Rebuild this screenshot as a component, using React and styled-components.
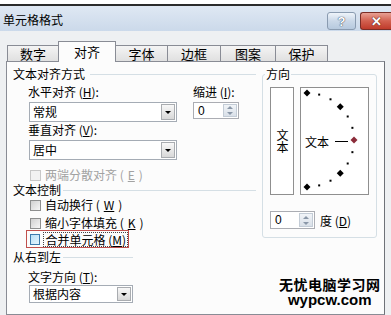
import React from 'react';
import styled, { createGlobalStyle } from 'styled-components';

const GlobalStyle = createGlobalStyle`
  html, body { margin: 0; padding: 0; background: #fff; }
  body {
    font-family: "Noto Sans CJK SC", "Noto Sans", sans-serif;
    font-size: 12px;
    color: #000;
  }
`;

const Screen = styled.div`
  position: relative;
  width: 391px;
  height: 315px;
  overflow: hidden;
  box-sizing: border-box;
  padding-top: 4px;
  background: #fff;
  display: flex;
  flex-direction: column;
`;

const Window = styled.div`
  flex: 1;
  display: flex;
  flex-direction: column;
  border-top: 2px solid #2b2b2b;
  background: #eef0f2;
  min-height: 0;
`;

const TitleBar = styled.div`
  height: 25px;
  display: flex;
  justify-content: space-between;
  padding-left: 3px;
  background: linear-gradient(#dfe8f3, #cbd9ea);
`;

const Title = styled.div`
  align-self: center;
  line-height: 14px;
  font-size: 12px;
  margin-top: 2px;
`;

const Controls = styled.div`
  display: flex;
  padding-top: 6px;
  height: 18px;
`;

const HelpButton = styled.div`
  width: 29px;
  margin-right: 4px;
  box-sizing: border-box;
  border: 1px solid #8a9bb0;
  border-radius: 3px;
  background: linear-gradient(#eef4fa, #cad8e8 50%, #b6c9de);
  display: flex;
  align-items: center;
  justify-content: center;
  font-family: "Liberation Sans", sans-serif;
  font-weight: bold;
  font-size: 13px;
  color: #fff;
  text-shadow: 0 0 1px #2d3d55, 0 0 1px #2d3d55;
`;

const CloseButton = styled.div`
  width: 31px;
  box-sizing: border-box;
  border: 1px solid #7a2d26;
  border-right: none;
  border-radius: 3px 0 0 3px;
  background: linear-gradient(#e8a093, #d2604f 50%, #bf3b2b);
  display: flex;
  align-items: center;
  justify-content: center;
  font-family: "Liberation Sans", sans-serif;
  font-weight: bold;
  font-size: 13px;
  color: #fff;
  text-shadow: 0 0 1px #5a1a12, 0 0 1px #5a1a12;
`;

const Body = styled.div`
  flex: 1;
  display: flex;
  flex-direction: column;
  padding: 0 6px;
  min-height: 0;
`;

const TabRow = styled.div`
  display: flex;
  align-items: flex-end;
  height: 20px;
  margin: 10px 0 0 1px;
`;

const Tab = styled.div`
  width: ${p => p.w}px;
  height: ${p => (p.active ? 21 : 16)}px;
  margin-bottom: ${p => (p.active ? -1 : 0)}px;
  margin-right: -1px;
  box-sizing: border-box;
  border: 1px solid #898c95;
  border-bottom: none;
  background: ${p => (p.active ? '#fcfcfc' : 'linear-gradient(#f4f4f4, #e0e0e0)')};
  display: flex;
  align-items: center;
  justify-content: center;
  font-size: 13px;
  line-height: 14px;
  position: relative;
  z-index: ${p => (p.active ? 1 : 0)};
`;

const Panel = styled.div`
  flex: 1;
  border: 1px solid #898c95;
  border-right-color: #6f7278;
  background: #fcfcfc;
  display: flex;
  gap: 6px;
  padding: 5px 6px 0 6px;
`;

const Column = styled.div`
  width: 243px;
  display: flex;
  flex-direction: column;
`;

const SectionHead = styled.div`
  display: flex;
  align-items: center;
  height: 14px;
  line-height: 14px;
  margin-top: ${p => p.mt || 0}px;
  white-space: nowrap;
  &::after {
    content: '';
    flex: 1;
    height: 1px;
    background: #d5dfe5;
    margin-left: ${p => p.gap ?? 2}px;
    margin-right: ${p => p.cut || 0}px;
  }
`;

const FieldLabel = styled.div`
  height: 14px;
  line-height: 14px;
  margin-left: ${p => p.ml ?? 15}px;
  margin-top: ${p => p.mt || 0}px;
  white-space: nowrap;
`;

const AlignRow = styled.div`
  display: flex;
  margin-top: 4px;
`;

const Cell = styled.div`
  display: flex;
  flex-direction: column;
  margin-left: ${p => p.ml || 0}px;
`;

const SelectBox = styled.div`
  width: ${p => p.w}px;
  height: ${p => p.h}px;
  box-sizing: border-box;
  margin-left: ${p => p.ml ?? 16}px;
  margin-top: ${p => p.mt || 0}px;
  border: 1px solid #a5acb5;
  background: #fff;
  display: flex;
  align-items: center;
  padding: 1px 1px 1px 3px;
`;

const SelectText = styled.span`
  flex: 1;
  line-height: 14px;
`;

const DropButton = styled.div`
  width: 14px;
  align-self: stretch;
  box-sizing: border-box;
  border: 1px solid #a9acb0;
  background: linear-gradient(#f8f8f8, #d8d8d8);
  display: flex;
  align-items: center;
  justify-content: center;
  &::before {
    content: '';
    border-left: 3px solid transparent;
    border-right: 3px solid transparent;
    border-top: 3px solid #000;
  }
`;

const Spinner = styled.div`
  width: ${p => p.w}px;
  height: ${p => p.h}px;
  box-sizing: border-box;
  margin-top: ${p => p.mt || 0}px;
  border: 1px solid #abadb3;
  background: #fff;
  display: flex;
  padding: 1px;
`;

const SpinValue = styled.span`
  flex: 1;
  padding-left: 3px;
  font-family: "Liberation Sans", sans-serif;
  font-size: 12px;
  line-height: 14px;
`;

const SpinButtons = styled.div`
  width: 14px;
  display: flex;
  flex-direction: column;
  border: 1px solid #c3ccd6;
  box-sizing: border-box;
  background: linear-gradient(#f1f4f8, #d9e0e8);
`;

const SpinArrow = styled.div`
  flex: 1;
  display: flex;
  align-items: center;
  justify-content: center;
  &::before {
    content: '';
    border-left: 3px solid transparent;
    border-right: 3px solid transparent;
    ${p => (p.up ? 'border-bottom' : 'border-top')}: 3px solid #8a97a8;
  }
`;

const CheckRow = styled.div`
  display: flex;
  align-items: center;
  gap: 4px;
  height: 14px;
  line-height: 14px;
  margin-left: 17px;
  margin-top: ${p => p.mt || 0}px;
  color: ${p => (p.disabled ? '#a2a2a2' : '#000')};
  white-space: nowrap;
`;

const Box = styled.span`
  width: 11px;
  height: 11px;
  box-sizing: border-box;
  border: 1px solid ${p => (p.focus ? '#3d7bad' : p.disabled ? '#c8c8c8' : '#8e8f8f')};
  background: ${p =>
    p.focus
      ? 'linear-gradient(135deg, #b9e0f7, #e6f5fd)'
      : p.disabled
      ? '#f2f2f2'
      : 'linear-gradient(135deg, #d0d0d0, #f6f6f6)'};
`;

const FocusRow = styled.div`
  display: flex;
  align-items: center;
  width: 103px;
  height: 18px;
  box-sizing: border-box;
  margin-left: 13px;
  padding-left: 3px;
  border: 1px solid #c0504d;
  white-space: nowrap;
`;

const FocusText = styled.span`
  margin-left: 3px;
  line-height: 13px;
  border: 1px dotted #444;
  padding: 0 1px;
`;

const Group = styled.fieldset`
  margin: 0;
  width: 115px;
  height: 171px;
  box-sizing: border-box;
  border: 1px solid #d5dfe5;
  border-radius: 3px;
  padding: 0;
`;

const Legend = styled.legend`
  margin-left: 2px;
  padding: 0 1px;
  height: 14px;
  line-height: 14px;
`;

const GroupInner = styled.div`
  padding: 6px 0 0 7px;
`;

const OrientRow = styled.div`
  display: flex;
  gap: 6px;
  height: 108px;
`;

const VerticalBox = styled.div`
  width: 24px;
  box-sizing: border-box;
  border: 1px solid #8f8f8f;
  background: #fff;
  display: flex;
  align-items: center;
  justify-content: center;
  writing-mode: vertical-rl;
  text-orientation: upright;
  line-height: 12px;
`;

const DialBox = styled.div`
  position: relative;
  width: 69px;
  box-sizing: border-box;
  border: 1px solid #8f8f8f;
  background: #fff;
  display: flex;
  align-items: center;
  padding-left: 4px;
  line-height: 14px;
`;

const DialDrawing = styled.svg`
  position: absolute;
  left: 0;
  top: 0;
`;

const DialText = styled.span`
  position: relative;
  margin-top: 1px;
`;

const DegreeRow = styled.div`
  display: flex;
  align-items: center;
  margin-top: 16px;
  gap: 5px;
`;

const Watermark = styled.div`
  position: absolute;
  left: 279px;
  top: 277px;
  display: flex;
  flex-direction: column;
  align-items: center;
  font-weight: bold;
`;

const WatermarkCn = styled.div`
  font-size: 14px;
  line-height: 14px;
  letter-spacing: 0.5px;
`;

const WatermarkEn = styled.div`
  font-family: "Liberation Sans", sans-serif;
  font-size: 15px;
  line-height: 13px;
  margin-top: 2px;
`;

const tabs = [
  { label: '数字', w: 52 },
  { label: '对齐', w: 58, active: true },
  { label: '字体', w: 53 },
  { label: '边框', w: 54 },
  { label: '图案', w: 56 },
  { label: '保护', w: 53 },
];

function Dial() {
  const cx = 6;
  const cy = 52;
  const r = 47;
  const marks = [];
  for (let k = 0; k <= 12; k++) {
    const a = ((-90 + 15 * k) * Math.PI) / 180;
    const x = cx + r * Math.cos(a);
    const y = cy + r * Math.sin(a);
    if (k % 3 === 0) {
      const fill = k === 6 ? '#8b2c3a' : '#000';
      marks.push(
        <polygon
          key={k}
          points={`${x},${y - 3.5} ${x + 3.5},${y} ${x},${y + 3.5} ${x - 3.5},${y}`}
          fill={fill}
        />
      );
    } else {
      marks.push(<rect key={k} x={x - 1} y={y - 1} width="2" height="2" fill="#000" />);
    }
  }
  return (
    <DialDrawing width="67" height="106" viewBox="0 0 67 106">
      <line x1="34" y1="53.5" x2="47" y2="53.5" stroke="#000" strokeWidth="1" />
      {marks}
    </DialDrawing>
  );
}

export default function App() {
  return (
    <>
      <GlobalStyle />
      <Screen>
        <Window>
          <TitleBar>
            <Title>单元格格式</Title>
            <Controls>
              <HelpButton>?</HelpButton>
              <CloseButton>✕</CloseButton>
            </Controls>
          </TitleBar>
          <Body>
            <TabRow>
              {tabs.map(t => (
                <Tab key={t.label} w={t.w} active={t.active}>
                  {t.label}
                </Tab>
              ))}
            </TabRow>
            <Panel>
              <Column>
                <SectionHead gap={5}>文本对齐方式</SectionHead>
                <AlignRow>
                  <Cell>
                    <FieldLabel>水平对齐 (<u>H</u>):</FieldLabel>
                    <SelectBox w={148} h={20} mt={3}>
                      <SelectText>常规</SelectText>
                      <DropButton />
                    </SelectBox>
                  </Cell>
                  <Cell ml={16}>
                    <FieldLabel ml={0}>缩进 (<u>I</u>):</FieldLabel>
                    <Spinner w={46} h={17} mt={3}>
                      <SpinValue>0</SpinValue>
                      <SpinButtons>
                        <SpinArrow up />
                        <SpinArrow />
                      </SpinButtons>
                    </Spinner>
                  </Cell>
                </AlignRow>
                <FieldLabel mt={1}>垂直对齐 (<u>V</u>):</FieldLabel>
                <SelectBox w={148} h={20} mt={3}>
                  <SelectText>居中</SelectText>
                  <DropButton />
                </SelectBox>
                <CheckRow mt={8} disabled>
                  <Box disabled />
                  两端分散对齐 (<u>E</u>)
                </CheckRow>
                <SectionHead mt={1}>文本控制</SectionHead>
                <CheckRow mt={1}>
                  <Box />
                  自动换行 (<u>W</u>)
                </CheckRow>
                <CheckRow mt={4}>
                  <Box />
                  缩小字体填充 (<u>K</u>)
                </CheckRow>
                <FocusRow>
                  <Box focus />
                  <FocusText>合并单元格 (<u>M</u>)</FocusText>
                </FocusRow>
                <SectionHead mt={2} cut={123}>从右到左</SectionHead>
                <FieldLabel mt={6}>文字方向 (<u>T</u>):</FieldLabel>
                <SelectBox w={104} h={18} mt={1}>
                  <SelectText>根据内容</SelectText>
                  <DropButton />
                </SelectBox>
              </Column>
              <Group>
                <Legend>方向</Legend>
                <GroupInner>
                  <OrientRow>
                    <VerticalBox>文本</VerticalBox>
                    <DialBox>
                      <Dial />
                      <DialText>文本</DialText>
                    </DialBox>
                  </OrientRow>
                  <DegreeRow>
                    <Spinner w={45} h={18}>
                      <SpinValue>0</SpinValue>
                      <SpinButtons>
                        <SpinArrow up />
                        <SpinArrow />
                      </SpinButtons>
                    </Spinner>
                    <span>度 (<u>D</u>)</span>
                  </DegreeRow>
                </GroupInner>
              </Group>
            </Panel>
          </Body>
        </Window>
        <Watermark>
          <WatermarkCn>无忧电脑学习网</WatermarkCn>
          <WatermarkEn>wypcw.com</WatermarkEn>
        </Watermark>
      </Screen>
    </>
  );
}
